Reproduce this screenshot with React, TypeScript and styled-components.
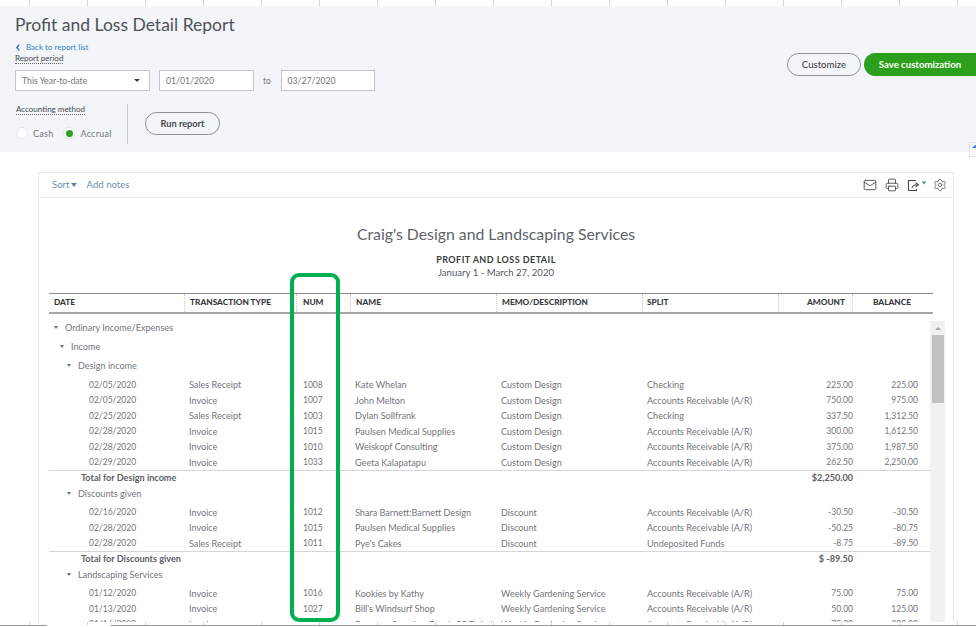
import styled, { createGlobalStyle } from 'styled-components';
import { Mail, Printer, Settings } from 'lucide-react';

const GlobalStyle = createGlobalStyle`
    html, body {
        margin: 0;
        padding: 0;
        background: #fff;
        font-family: Lato, "Open Sans", sans-serif;
    }
`;

const ticks = 'repeating-linear-gradient(90deg, #fff 0, #fff 29px, #d4d4d4 29px, #d4d4d4 30px, #fff 30px, #fff 58px)';

const Page = styled.div`
    position: relative;
    display: flex;
    flex-direction: column;
    width: 976px;
    height: 627px;
    overflow: hidden;
`;

const Ruler = styled.div`
    flex: none;
    height: 6px;
    background: ${ticks};
`;

const BottomRuler = styled.div`
    flex: none;
    height: 5px;
    background:
        linear-gradient(#fff, #fff) 0 4px / 100% 1px no-repeat,
        linear-gradient(#9a9a9a, #9a9a9a) 0 3px / 47px 1px no-repeat,
        linear-gradient(#fff, #fff) 47px 3px / 64px 1px no-repeat,
        linear-gradient(#9a9a9a, #9a9a9a) 111px 3px / 865px 1px no-repeat,
        ${ticks};
`;

const Panel = styled.header`
    position: relative;
    flex: none;
    display: flex;
    justify-content: space-between;
    height: 146px;
    background: #f3f5f9;
    box-sizing: border-box;
    padding: 9px 0 0 15px;
`;

const PanelLeft = styled.div`
    display: flex;
    flex-direction: column;
`;

const Title = styled.h1`
    margin: 0;
    font-size: 17.5px;
    line-height: 20px;
    font-weight: 400;
    color: #4f5257;
`;

const BackLink = styled.a`
    display: flex;
    align-items: center;
    gap: 6px;
    margin: 7px 0 0 1px;
    font-size: 8px;
    line-height: 11px;
    color: #2f86c8;
`;

const DottedLabel = styled.span`
    align-self: flex-start;
    font-size: 8px;
    line-height: 10px;
    color: #44474c;
    border-bottom: 1px dotted #666;
`;

const PeriodRow = styled.div`
    display: flex;
    align-items: center;
    margin-top: 6px;
    height: 21px;
`;

const Field = styled.div<{ $width: number }>`
    display: flex;
    align-items: center;
    justify-content: space-between;
    box-sizing: border-box;
    width: ${p => p.$width}px;
    height: 21px;
    padding: 0 6px;
    background: #fff;
    border: 1px solid #c4c6c9;
    font-size: 8.7px;
    color: #74767b;
`;

const PeriodSelect = styled(Field)`
    margin-right: 9px;
`;

const FieldCaret = styled.span`
    width: 0;
    height: 0;
    margin-right: 3px;
    border-left: 3px solid transparent;
    border-right: 3px solid transparent;
    border-top: 3.5px solid #393a3d;
`;

const PeriodTo = styled.span`
    width: 27px;
    text-align: center;
    font-size: 8.5px;
    color: #74767b;
`;

const MethodRow = styled.div`
    display: flex;
    margin-top: 13px;
    height: 40px;
`;

const MethodColumn = styled.div`
    display: flex;
    flex-direction: column;
    width: 112px;
    padding-left: 1px;
    box-sizing: border-box;
`;

const RadioRow = styled.div`
    display: flex;
    align-items: center;
    margin-top: 12px;
    font-size: 9px;
    letter-spacing: 0.25px;
    color: #74767b;
`;

const Radio = styled.span<{ $on?: boolean }>`
    display: flex;
    align-items: center;
    justify-content: center;
    box-sizing: border-box;
    width: 12px;
    height: 12px;
    margin-right: 5px;
    border-radius: 50%;
    background: #fff;
    border: 1px solid #e6e7ea;

    &::after {
        content: '';
        display: ${p => (p.$on ? 'block' : 'none')};
        width: 7px;
        height: 7px;
        border-radius: 50%;
        background: #2ca01c;
    }
`;

const RadioLabel = styled.span`
    margin-right: 10px;
`;

const Divider = styled.div`
    width: 1px;
    background: #c9cbce;
`;

const Pill = styled.button<{ $primary?: boolean }>`
    height: 23px;
    padding: 0;
    border-radius: 12px;
    box-sizing: border-box;
    font-family: inherit;
    font-size: 9.6px;
    font-weight: 700;
    color: ${p => (p.$primary ? '#fff' : '#44474c')};
    background: ${p => (p.$primary ? '#2ca01c' : 'transparent')};
    border: ${p => (p.$primary ? '0' : '1px solid #8d9096')};
`;

const RunButton = styled(Pill)`
    width: 75px;
    margin: 8px 0 0 17px;
    font-size: 9.2px;
`;

const PanelActions = styled.div`
    display: flex;
    gap: 3px;
    padding-top: 38px;
`;

const CustomizeButton = styled(Pill)`
    width: 74px;
    font-weight: 500;
`;

const SaveButton = styled(Pill)`
    width: 112px;
    border-radius: 12px 0 0 12px;
`;

const ScrollNub = styled.div`
    position: absolute;
    right: 0;
    top: 136px;
    width: 7px;
    height: 15px;
    box-sizing: border-box;
    border: 1px solid #dfe2e7;
    border-right: 0;
    background: #f7f8fa;

    &::after {
        content: '';
        position: absolute;
        left: 2px;
        top: 2px;
        border-left: 3px solid transparent;
        border-right: 3px solid transparent;
        border-bottom: 3px solid #3f7fc0;
    }
`;

const Content = styled.main`
    position: relative;
    flex: 1;
    min-height: 0;
    overflow: hidden;
    padding: 20px 22px 0 38px;
`;

const Card = styled.section`
    box-sizing: border-box;
    width: 916px;
    height: 460px;
    overflow: hidden;
    border: 1px solid #e6ecf3;
    border-bottom: 0;
`;

const CardBar = styled.div`
    display: flex;
    align-items: center;
    justify-content: space-between;
    box-sizing: border-box;
    height: 25px;
    padding: 0 6px 0 13px;
    border-bottom: 1px solid #e6ecf3;
`;

const BarLinks = styled.div`
    display: flex;
    align-items: center;
    font-size: 9.6px;
    line-height: 11px;
    margin-top: -1px;
    color: #6d8fb0;
`;

const SortCaret = styled.span`
    width: 0;
    height: 0;
    margin: 1px 10px 0 1px;
    border-left: 3px solid transparent;
    border-right: 3px solid transparent;
    border-top: 4px solid #5d83a8;
`;

const BarIcons = styled.div`
    display: flex;
    align-items: center;
    color: #44474c;
`;

const IconSlot = styled.span<{ $gap: number }>`
    display: flex;
    margin-left: ${p => p.$gap}px;
`;

const ExportCaret = styled(SortCaret)`
    margin: 0 0 4px 0;
    transform: scale(0.8);
`;

const ReportHead = styled.div`
    display: flex;
    flex-direction: column;
    align-items: center;
    box-sizing: border-box;
    height: 95px;
    padding-top: 27px;
    color: #55585d;
`;

const CompanyName = styled.div`
    font-size: 15.8px;
    line-height: 18px;
    color: #5f6267;
`;

const ReportName = styled.div`
    margin-top: 11px;
    font-size: 9px;
    line-height: 11px;
    font-weight: 700;
    letter-spacing: 0.45px;
    color: #393a3d;
`;

const ReportDates = styled.div`
    margin-top: 2px;
    font-size: 9.6px;
    line-height: 11px;
`;

const columns = '136px 112px 54px 146px 146px 136px 74px 1fr';

const HeadRow = styled.div`
    display: grid;
    grid-template-columns: ${columns};
    width: 884px;
    margin-left: 10px;
    height: 21px;
    box-sizing: border-box;
    border-top: 1px solid #8c8c8c;
    border-bottom: 2px solid #a6a6a6;
`;

const HeadCell = styled.div<{ $right?: number; $left?: number }>`
    display: flex;
    align-items: center;
    justify-content: ${p => (p.$right ? 'flex-end' : 'flex-start')};
    box-sizing: border-box;
    padding-left: ${p => p.$left ?? 5}px;
    padding-right: ${p => p.$right ?? 0}px;
    padding-bottom: 2px;
    font-size: 8.3px;
    font-weight: 900;
    color: #393a3d;
    border-right: 1px dotted #c8c8c8;

    &:last-child {
        border-right: 0;
    }
`;

const TableBody = styled.div`
    display: flex;
    margin-left: 10px;
    padding-top: 4px;
`;

const Rows = styled.div`
    width: 881px;
`;

const Group = styled.div<{ $indent: number }>`
    display: flex;
    align-items: center;
    height: 19px;
    padding-left: ${p => p.$indent}px;
    font-size: 9.1px;
    color: #74767b;
`;

const GroupCaret = styled.span`
    width: 0;
    height: 0;
    margin-right: 7px;
    border-left: 2.5px solid transparent;
    border-right: 2.5px solid transparent;
    border-top: 3px solid #6b6d72;
`;

const DataBlock = styled.div`
    padding-top: 2px;
`;

const DataRow = styled.div`
    display: grid;
    grid-template-columns: ${columns};
    height: 15.5px;
    align-items: center;
    font-size: 9.1px;
    color: #74767b;
`;

const Cell = styled.div<{ $left?: number }>`
    padding-left: ${p => p.$left ?? 4}px;
    white-space: nowrap;
`;

const NumCell = styled.div<{ $left?: number; $right?: number }>`
    padding-left: ${p => p.$left ?? 0}px;
    padding-right: ${p => p.$right ?? 0}px;
    font-size: 8.5px;
    text-align: ${p => (p.$left ? 'left' : 'right')};
    white-space: nowrap;
`;

const TotalRow = styled.div`
    display: grid;
    grid-template-columns: ${columns};
    box-sizing: border-box;
    height: 13.5px;
    padding-top: 1px;
    align-items: center;
    border-top: 1px solid #d4d6d9;
    font-size: 9.1px;
    font-weight: 700;
    color: #5d6065;
`;

const TotalLabel = styled.div`
    grid-column: 1 / 7;
    padding-left: 32px;
`;

const TotalAmount = styled.div`
    text-align: right;
    white-space: nowrap;
`;

const Scrollbar = styled.div`
    position: relative;
    width: 15px;
    height: 320px;
    margin-top: 3px;
    background: #f1f1f1;
`;

const ScrollUp = styled.span`
    position: absolute;
    left: 5px;
    top: 6px;
    border-left: 3px solid transparent;
    border-right: 3px solid transparent;
    border-bottom: 3px solid #a3a3a3;
`;

const ScrollThumb = styled.div`
    position: absolute;
    left: 2px;
    top: 14px;
    width: 12px;
    height: 68px;
    background: #c1c1c1;
`;

const Highlight = styled.div`
    position: absolute;
    left: 290px;
    top: 121px;
    width: 50px;
    height: 349px;
    box-sizing: border-box;
    border: 4px solid #00b050;
    border-radius: 9px;
    pointer-events: none;
`;

type Tx = [string, string, string, string, string, string, string, string];

const designRows: Tx[] = [
    ['02/05/2020', 'Sales Receipt', '1008', 'Kate Whelan', 'Custom Design', 'Checking', '225.00', '225.00'],
    ['02/05/2020', 'Invoice', '1007', 'John Melton', 'Custom Design', 'Accounts Receivable (A/R)', '750.00', '975.00'],
    ['02/25/2020', 'Sales Receipt', '1003', 'Dylan Sollfrank', 'Custom Design', 'Checking', '337.50', '1,312.50'],
    ['02/28/2020', 'Invoice', '1015', 'Paulsen Medical Supplies', 'Custom Design', 'Accounts Receivable (A/R)', '300.00', '1,612.50'],
    ['02/28/2020', 'Invoice', '1010', 'Weiskopf Consulting', 'Custom Design', 'Accounts Receivable (A/R)', '375.00', '1,987.50'],
    ['02/29/2020', 'Invoice', '1033', 'Geeta Kalapatapu', 'Custom Design', 'Accounts Receivable (A/R)', '262.50', '2,250.00'],
];

const discountRows: Tx[] = [
    ['02/16/2020', 'Invoice', '1012', 'Shara Barnett:Barnett Design', 'Discount', 'Accounts Receivable (A/R)', '-30.50', '-30.50'],
    ['02/28/2020', 'Invoice', '1015', 'Paulsen Medical Supplies', 'Discount', 'Accounts Receivable (A/R)', '-50.25', '-80.75'],
    ['02/28/2020', 'Sales Receipt', '1011', "Pye's Cakes", 'Discount', 'Undeposited Funds', '-8.75', '-89.50'],
];

const landscapingRows: Tx[] = [
    ['01/12/2020', 'Invoice', '1016', 'Kookies by Kathy', 'Weekly Gardening Service', 'Accounts Receivable (A/R)', '75.00', '75.00'],
    ['01/13/2020', 'Invoice', '1027', "Bill's Windsurf Shop", 'Weekly Gardening Service', 'Accounts Receivable (A/R)', '50.00', '125.00'],
    ['01/16/2020', 'Invoice', '1028', 'Freeman Sporting Goods:55 Twin Lane', 'Weekly Gardening Service', 'Accounts Receivable (A/R)', '75.00', '200.00'],
];

function TxRows({ rows }: { rows: Tx[] }) {
    return (
        <DataBlock>
            {rows.map(r => (
                <DataRow key={r[0] + r[2]}>
                    <NumCell $left={40}>{r[0]}</NumCell>
                    <Cell>{r[1]}</Cell>
                    <NumCell $left={6}>{r[2]}</NumCell>
                    <Cell>{r[3]}</Cell>
                    <Cell>{r[4]}</Cell>
                    <Cell>{r[5]}</Cell>
                    <NumCell>{r[6]}</NumCell>
                    <NumCell $right={12}>{r[7]}</NumCell>
                </DataRow>
            ))}
        </DataBlock>
    );
}

function ExportIcon() {
    return (
        <svg width="14" height="13" viewBox="0 0 14 13" fill="none" stroke="#44474c" strokeWidth="1.1">
            <path d="M9 1.5H1.5V11.5H9.5V10" />
            <path d="M5 9C5.5 6.8 7 5.8 10 5.8" />
            <path d="M8.6 3.8L11.4 5.8L8.6 7.8" />
        </svg>
    );
}

function BackChevron() {
    return (
        <svg width="4" height="7" viewBox="0 0 4 7" fill="none" stroke="#1f6fb5" strokeWidth="1.3">
            <path d="M3.4 .6L.8 3.5L3.4 6.4" />
        </svg>
    );
}

export default function App() {
    return (
        <Page>
            <GlobalStyle />
            <Ruler />
            <Panel>
                <PanelLeft>
                    <Title>Profit and Loss Detail Report</Title>
                    <BackLink><BackChevron />Back to report list</BackLink>
                    <DottedLabel>Report period</DottedLabel>
                    <PeriodRow>
                        <PeriodSelect $width={135}>This Year-to-date<FieldCaret /></PeriodSelect>
                        <Field $width={94.5}>01/01/2020</Field>
                        <PeriodTo>to</PeriodTo>
                        <Field $width={94}>03/27/2020</Field>
                    </PeriodRow>
                    <MethodRow>
                        <MethodColumn>
                            <DottedLabel>Accounting method</DottedLabel>
                            <RadioRow>
                                <Radio />
                                <RadioLabel>Cash</RadioLabel>
                                <Radio $on />
                                <span>Accrual</span>
                            </RadioRow>
                        </MethodColumn>
                        <Divider />
                        <RunButton>Run report</RunButton>
                    </MethodRow>
                </PanelLeft>
                <PanelActions>
                    <CustomizeButton>Customize</CustomizeButton>
                    <SaveButton $primary>Save customization</SaveButton>
                </PanelActions>
                <ScrollNub />
            </Panel>
            <Content>
                <Card>
                    <CardBar>
                        <BarLinks>Sort<SortCaret />Add notes</BarLinks>
                        <BarIcons>
                            <Mail size={14} strokeWidth={1.5} />
                            <IconSlot $gap={8}><Printer size={14} strokeWidth={1.5} /></IconSlot>
                            <IconSlot $gap={8}><ExportIcon /></IconSlot>
                            <ExportCaret />
                            <IconSlot $gap={6}><Settings size={14} strokeWidth={1.2} /></IconSlot>
                        </BarIcons>
                    </CardBar>
                    <ReportHead>
                        <CompanyName>Craig's Design and Landscaping Services</CompanyName>
                        <ReportName>PROFIT AND LOSS DETAIL</ReportName>
                        <ReportDates>January 1 - March 27, 2020</ReportDates>
                    </ReportHead>
                    <HeadRow>
                        <HeadCell>DATE</HeadCell>
                        <HeadCell>TRANSACTION TYPE</HeadCell>
                        <HeadCell $left={6}>NUM</HeadCell>
                        <HeadCell>NAME</HeadCell>
                        <HeadCell>MEMO/DESCRIPTION</HeadCell>
                        <HeadCell $left={4}>SPLIT</HeadCell>
                        <HeadCell $right={7}>AMOUNT</HeadCell>
                        <HeadCell $right={22}>BALANCE</HeadCell>
                    </HeadRow>
                    <TableBody>
                        <Rows>
                            <Group $indent={5}><GroupCaret />Ordinary Income/Expenses</Group>
                            <Group $indent={11}><GroupCaret />Income</Group>
                            <Group $indent={18}><GroupCaret />Design income</Group>
                            <TxRows rows={designRows} />
                            <TotalRow>
                                <TotalLabel>Total for Design income</TotalLabel>
                                <TotalAmount>$2,250.00</TotalAmount>
                            </TotalRow>
                            <Group $indent={18}><GroupCaret />Discounts given</Group>
                            <TxRows rows={discountRows} />
                            <TotalRow>
                                <TotalLabel>Total for Discounts given</TotalLabel>
                                <TotalAmount>$ -89.50</TotalAmount>
                            </TotalRow>
                            <Group $indent={18}><GroupCaret />Landscaping Services</Group>
                            <TxRows rows={landscapingRows} />
                        </Rows>
                        <Scrollbar>
                            <ScrollUp />
                            <ScrollThumb />
                        </Scrollbar>
                    </TableBody>
                </Card>
                <Highlight />
            </Content>
            <BottomRuler />
        </Page>
    );
}
